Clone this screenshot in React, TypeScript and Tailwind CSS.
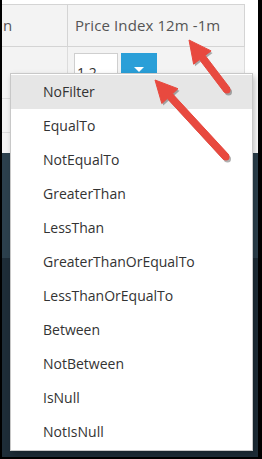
import React from "react";

const FILTERS = [
  "NoFilter",
  "EqualTo",
  "NotEqualTo",
  "GreaterThan",
  "LessThan",
  "GreaterThanOrEqualTo",
  "LessThanOrEqualTo",
  "Between",
  "NotBetween",
  "IsNull",
  "NotIsNull",
];

type Pt = [number, number];

// builds a callout arrow polygon from tail to tip
function arrowPoints(tail: Pt, tip: Pt, headLen: number, headW: number, shaftW: number) {
  const dx = tip[0] - tail[0];
  const dy = tip[1] - tail[1];
  const len = Math.hypot(dx, dy);
  const ux = dx / len;
  const uy = dy / len;
  const nx = -uy;
  const ny = ux;
  const bx = tip[0] - ux * headLen;
  const by = tip[1] - uy * headLen;
  const pts: Pt[] = [
    [tail[0] + nx * shaftW / 2, tail[1] + ny * shaftW / 2],
    [bx + nx * shaftW / 2, by + ny * shaftW / 2],
    [bx + nx * headW / 2, by + ny * headW / 2],
    tip,
    [bx - nx * headW / 2, by - ny * headW / 2],
    [bx - nx * shaftW / 2, by - ny * shaftW / 2],
    [tail[0] - nx * shaftW / 2, tail[1] - ny * shaftW / 2],
  ];
  return pts.map((p) => `${p[0].toFixed(1)},${p[1].toFixed(1)}`).join(" ");
}

function Arrow({ tail, tip }: { tail: Pt; tip: Pt }) {
  return (
    <g>
      <g transform="translate(1.5,2)" opacity="0.3">
        <polygon points={arrowPoints(tail, tip, 22, 22, 7)} fill="#000" strokeLinejoin="round" />
        <circle cx={tail[0]} cy={tail[1]} r={3.5} fill="#000" />
      </g>
      <polygon points={arrowPoints(tail, tip, 22, 22, 7)} fill="#e8493f" strokeLinejoin="round" stroke="#e8493f" strokeWidth={1} />
      <circle cx={tail[0]} cy={tail[1]} r={3.5} fill="#e8493f" />
    </g>
  );
}

export default function App() {
  return (
    <div
      className="relative w-[262px] h-[459px] overflow-hidden bg-black pl-[2px] pr-[4px] pb-[2px]"
      style={{ fontFamily: '"Open Sans", "Liberation Sans", sans-serif' }}
    >
      <div className="flex flex-col h-full bg-white">
        {/* Grid area */}
        <div className="flex flex-col pt-[4px] pr-[13px]">
          {/* Header */}
          <div className="flex h-[43px] bg-[#f3f3f3] border-t border-b border-r border-[#d4d4d4]">
            <div className="w-[66px] flex items-center border-r border-[#d4d4d4] text-[15px] text-[#555] pl-[1px]">
              n
            </div>
            <div className="flex-1 flex items-center pl-[7px] text-[15px] text-[#555] tracking-[0.1px]">
              Price Index 12m -1m
            </div>
          </div>
          {/* Filter row */}
          <div className="flex h-[52px] bg-[#f3f3f3] border-b border-r border-[#dcdcdc]">
            <div className="w-[66px] border-r border-[#dcdcdc]" />
            <div className="flex-1 flex items-start gap-[3px] pt-[6px] pl-[6px]">
              <div className="w-[44px] h-[30px] bg-white border border-[#cfcfcf] text-[14px] text-[#333] pl-[2px] pt-[12px] leading-none">
                1.2
              </div>
              <div className="w-[36px] h-[22px] bg-[#2a9fd8] flex items-end justify-center pb-[3px]">
                <div className="w-0 h-0 border-l-[5px] border-r-[5px] border-t-[5px] border-l-transparent border-r-transparent border-t-white" />
              </div>
            </div>
          </div>
          <div className="flex h-[34px] bg-[#f3f3f3] border-b border-r border-[#dcdcdc]">
            <div className="w-[66px] border-r border-[#dcdcdc]" />
          </div>
          <div className="h-[20px] bg-[#f3f3f3] border-r border-[#dcdcdc]" />
        </div>
        {/* Dark panel */}
        <div className="flex-1 flex flex-col">
          <div className="h-[105px] bg-[#2c404d]" />
          <div className="flex-1 bg-[#1e2d38]" />
        </div>
      </div>

      {/* Filter dropdown */}
      <div className="absolute left-[10px] top-[73px] w-[243px] flex flex-col bg-white border border-[#c8c8c8] shadow-[2px_3px_6px_rgba(0,0,0,0.25)] py-[1px]">
        {FILTERS.map((f, i) => (
          <div
            key={f}
            className={`h-[34px] flex items-center pl-[32px] pb-[1px] text-[14px] text-[#333] ${i === 0 ? "bg-[#e6e6e6]" : "bg-white"}`}
          >
            {f}
          </div>
        ))}
      </div>

      {/* Callout arrows */}
      <svg className="absolute left-0 top-0 pointer-events-none" width={262} height={459}>
        <Arrow tail={[227, 90]} tip={[189, 40]} />
        <Arrow tail={[226, 157]} tip={[155, 80]} />
      </svg>
    </div>
  );
}
